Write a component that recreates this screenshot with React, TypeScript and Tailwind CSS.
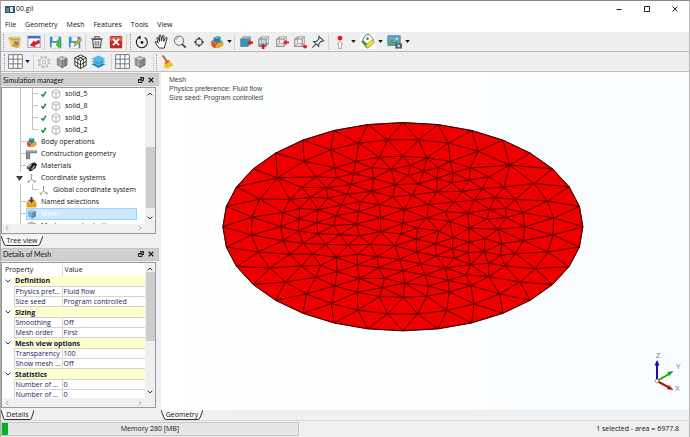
import { memo, useMemo, useState } from "react";
import type { ReactNode } from "react";
import { clsx } from "clsx";

type Point = [number, number];

// Inner nodes of the surface mesh, in model units
const innerNodes: Point[] = [
  [432, 84], [519, 74], [348, 104], [268, 138], [424, 139], [495, 126], [188, 188], [361, 158],
  [304, 185], [365, 188], [417, 175], [472, 158], [530, 162], [335, 218], [262, 217], [410, 208],
  [477, 190], [542, 209], [225, 253], [286, 247], [340, 249], [396, 237], [471, 229], [535, 245],
  [135, 252], [255, 280], [310, 284], [380, 270], [437, 260], [495, 269], [205, 293], [112, 306],
  [253, 312], [306, 323], [364, 302], [432, 290], [498, 308],
  [110, 360], [198, 335], [205, 377], [251, 348], [309, 356], [358, 332], [376, 359], [266, 385],
  [426, 327], [434, 362], [497, 350], [559, 357], [130, 411], [225, 418], [333, 388], [293, 417],
  [400, 390], [467, 388], [541, 392], [365, 427], [428, 418], [488, 425], [165, 459], [260, 453],
  [318, 452], [428, 450], [492, 458], [555, 433], [212, 501], [304, 487], [367, 470], [435, 491],
  [509, 490], [565, 468], [275, 537], [361, 513], [428, 532], [503, 518], [495, 545], [350, 566],
  [430, 586], [519, 597], [567, 547], [565, 325],
  [612, 74], [702, 84], [791, 108], [886, 150], [959, 205], [999, 258], [1018, 309], [565, 123],
  [637, 128], [707, 139], [588, 151], [671, 157], [768, 158], [581, 181], [628, 168], [716, 173],
  [667, 190], [712, 203], [764, 195], [824, 185], [612, 206], [869, 216], [803, 221], [667, 230],
  [742, 229], [593, 240], [720, 261], [780, 255], [843, 247], [903, 253], [641, 268], [569, 283],
  [692, 290], [760, 294], [825, 283], [874, 280], [926, 293], [818, 312], [875, 308], [637, 309],
  [705, 319],
  [1016, 360], [1001, 411], [963, 461], [917, 501], [856, 537], [779, 567], [697, 587], [609, 597],
  [931, 335], [927, 377], [851, 343], [862, 386], [764, 339], [764, 381], [673, 348], [716, 368],
  [609, 339], [605, 372], [663, 386], [713, 401], [812, 371], [809, 410], [761, 413], [859, 421],
  [904, 416], [607, 411], [665, 423], [720, 430], [768, 449], [823, 445], [872, 453], [619, 447],
  [693, 459], [755, 480], [823, 485], [631, 480], [701, 496], [769, 512], [570, 505], [642, 513],
  [704, 531], [637, 544],
];

// 32 nodes on the rim of the ellipse
const rimNodes: Point[] = Array.from({ length: 32 }, (_, i) => {
  const a = (i * Math.PI) / 16;
  return [565 + 541 * Math.cos(a), 335 + 313 * Math.sin(a)];
});

// The disc is seen tilted, so y is stretched back before the nodes are connected
const TILT = 541 / 313;

// Bowyer-Watson triangulation
function triangulate(nodes: Point[]) {
  const flat = nodes.map(([x, y]): Point => [x, y * TILT]);
  const pts: Point[] = [...flat, [-60000, -40000], [60000, -40000], [500, 80000]];
  const n = nodes.length;

  const make = (a: number, b: number, c: number) => {
    const [ax, ay] = pts[a];
    const [bx, by] = pts[b];
    const [cx, cy] = pts[c];
    const d = 2 * (ax * (by - cy) + bx * (cy - ay) + cx * (ay - by));
    const a2 = ax * ax + ay * ay;
    const b2 = bx * bx + by * by;
    const c2 = cx * cx + cy * cy;
    const x = (a2 * (by - cy) + b2 * (cy - ay) + c2 * (ay - by)) / d;
    const y = (a2 * (cx - bx) + b2 * (ax - cx) + c2 * (bx - ax)) / d;
    return { v: [a, b, c], x, y, r: (ax - x) ** 2 + (ay - y) ** 2 };
  };

  let tris = [make(n, n + 1, n + 2)];
  // inner nodes go first, the rim is nearly cocircular and is added last
  for (let i = n - 1; i >= 0; i--) {
    const [px, py] = pts[i];
    const edges = new Map<string, [number, number]>();
    const kept: typeof tris = [];
    for (const t of tris) {
      if ((px - t.x) ** 2 + (py - t.y) ** 2 >= t.r) {
        kept.push(t);
        continue;
      }
      for (let k = 0; k < 3; k++) {
        const a = t.v[k];
        const b = t.v[(k + 1) % 3];
        const key = a < b ? `${a}-${b}` : `${b}-${a}`;
        if (edges.has(key)) edges.delete(key);
        else edges.set(key, [a, b]);
      }
    }
    edges.forEach(([a, b]) => kept.push(make(a, b, i)));
    tris = kept;
  }
  return tris.filter((t) => t.v.every((v) => v < n)).map((t) => t.v.map((v) => nodes[v]));
}

const Icon = ({ children, size = "size-[14px]" }: { children: ReactNode; size?: string }) => (
  <svg viewBox="0 0 16 16" className={clsx(size, "shrink-0")} fill="none" aria-hidden="true">
    {children}
  </svg>
);

const OpenIcon = () => (
  <Icon>
    <path d="M0 3l4-1h10v4l-2 9-8-2z" fill="#c6a640" />
    <path d="M0 3l4 3 1 8-3-3z" fill="#f3dc7c" />
    <path d="M4 6h10v8l-4-1-2-3-3 1z" fill="#e6c95c" />
    <path d="M7 7l6 1-2 5-2-2-2-1z" fill="#8d8566" />
    <path d="M3 2h11v2H3z" fill="#d9d2b0" />
  </Icon>
);

const ImportIcon = () => (
  <Icon>
    <rect x="1" y="1.500" width="14" height="12.500" fill="#fff" stroke="#7c8eb5" />
    <path d="M1 1h14v3H1z" fill="#3f74c8" />
    <path d="M14 5l-5 3-1-2-5 6 7 2-1-2 6-3z" fill="#e02020" />
  </Icon>
);

const SaveIcon = ({ children }: { children: ReactNode }) => (
  <Icon>
    <path d="M1 2h13v13H3l-2-2z" fill="#3b8fc2" />
    <path d="M4 2h7v5H4z" fill="#e8f3fa" />
    <path d="M3 9h9v6H3z" fill="#f5f9fc" />
    {children}
  </Icon>
);

const TrashIcon = () => (
  <Icon>
    <path d="M1.500 4.500h13M5.500 4V2h5v2M3 5l1 9.500h8L13 5z" stroke="#555" strokeWidth="1.300" />
    <path d="M6 7v6M8 7v6M10 7v6" stroke="#666" />
  </Icon>
);

const DeleteIcon = () => (
  <Icon>
    <rect x="1" y="1" width="14" height="14" rx="1" fill="#c5281f" />
    <path d="M1 2h14v5H1z" fill="#dc5a4e" />
    <path d="M4.500 4.500l7 7M11.500 4.500l-7 7" stroke="#fff" strokeWidth="2.200" />
  </Icon>
);

const RotateIcon = () => (
  <Icon>
    <path d="M5 2.600A6.300 6.300 0 1 0 11 2.800" stroke="#222" strokeWidth="1.300" />
    <path d="M2.500 2.500L6.500.5v4.500z" fill="#222" />
    <circle cx="8" cy="8.500" r="1.700" fill="#222" />
  </Icon>
);

const HandIcon = () => (
  <Icon size="size-[15px]">
    <path
      d="M5.500 15L1.500 9.500c-1-1.500.5-2 1.500-1L4.500 10 3 4.500c0-1.200 1.300-1.200 1.600-.2L6 8 5.600 2c0-1.200 1.500-1.300 1.700-.1L8 7.500 9 2c.3-1 1.700-.8 1.600.3L10.300 8l2.200-4c.6-.9 1.700-.3 1.400.6L12 11l-1 4z"
      fill="#fff"
      stroke="#222"
    />
  </Icon>
);

const ZoomIcon = () => (
  <Icon>
    <circle cx="6.800" cy="6.500" r="5.300" stroke="#555" />
    <path d="M3.500 6a3.500 3.500 0 0 1 3-3" stroke="#999" />
    <path d="M10.500 10.500l4 4" stroke="#444" strokeWidth="2" />
  </Icon>
);

const FitIcon = () => (
  <Icon>
    <circle cx="8" cy="8" r="3.800" stroke="#444" strokeWidth="1.200" />
    <path d="M8 2.500V5M8 11v2.500M2.500 8H5M11 8h2.500" stroke="#333" strokeWidth="1.800" />
  </Icon>
);

const BodiesIcon = ({ size }: { size?: string }) => (
  <Icon size={size}>
    <path d="M1 7l5-2 4 3v4l-4 3-4-2z" fill="#df4a24" />
    <path d="M1 7l5-2 4 3-4 2z" fill="#f18340" />
    <path d="M8 9l5-3 2 2v4l-6 3-3-2z" fill="#69a73c" />
    <path d="M7 11l6-3 2 1v3l-6 3-3-1z" fill="#eba733" />
    <path d="M4 3l4-2 4 1v5L8 9 4 7z" fill="#2b7fae" />
    <path d="M4 3l4-2 4 1-4 2z" fill="#6cc0dd" />
  </Icon>
);

const Wireframe = ({ front }: { front?: string }) => (
  <>
    <path d="M5 2h8v8M13 2L10.500 4.500M5 2L2 4.500M5 2v8h8M5 10l-3 3M13 10l-3 3" stroke="#888" strokeWidth=".8" />
    <path d="M2 4.500h8.500V13H2z" stroke="#777" fill={front ?? "none"} />
  </>
);

const ViewFrontIcon = () => (
  <Icon>
    <path d="M2 4.500L5 2h8l-2.500 2.500z" fill="#8fd0ee" />
    <path d="M10.500 4.500L13 2v8l-2.500 3z" fill="#6fa9c4" />
    <Wireframe front="#279bd0" />
    <path d="M16 7.500h-3V5.500L9.500 9l3.500 3v-2h3z" fill="#e01515" />
  </Icon>
);

const ViewBottomIcon = () => (
  <Icon>
    <path d="M2 10h11l-3 3H2z" fill="#47a9d8" />
    <Wireframe front="#8fc9e477" />
    <path d="M5.500 16v-3H4l3-3.500L10 13H8.500v3z" fill="#e01515" />
  </Icon>
);

const ViewRightIcon = () => (
  <Icon>
    <Wireframe />
    <path d="M16 7.500h-3V5.500L9.500 8.500l3.500 3v-2h3z" fill="#e01515" />
  </Icon>
);

const ViewBackIcon = () => (
  <Icon>
    <Wireframe />
    <path d="M16 12h-2v-1.500L10.500 13l3.500 3v-1.500h2z" fill="#e01515" />
  </Icon>
);

const PinIcon = () => (
  <Icon>
    <path d="M1.500 14.500L6 10M9 1.500l5.500 5-1.500.8-1-.3-3 3-.2 3L3 7.500l3.200-.2 3-3-.5-1.500z" stroke="#444" strokeWidth="1.200" />
  </Icon>
);

const VertexIcon = () => (
  <Icon>
    <circle cx="8" cy="3.500" r="2.700" fill="#e01515" />
    <path d="M6.500 15.500v-5H5L8 7l3 3.500H9.500v5z" fill="#fff" stroke="#888" strokeWidth=".8" />
  </Icon>
);

const MeasureIcon = () => (
  <Icon size="size-[15px]">
    <path d="M0 0h16v16H0z" fill="#fff" />
    <path d="M3 6l3-5 4-.5L14 5v4l-6 2-5-2z" fill="#fff" stroke="#666" />
    <circle cx="8" cy="5" r="1.500" fill="#777" />
    <path d="M1 8l3-1 5 5-2 3z" fill="#3d9c35" />
    <path d="M6 12l7-6 2.500 3L8 15.500z" fill="#f4df20" stroke="#7b7416" strokeWidth=".6" />
  </Icon>
);

const ScreenshotIcon = () => (
  <Icon size="size-[15px]">
    <rect x="1" y="2" width="13" height="10" fill="#5fa9d4" stroke="#4f758c" />
    <path d="M2 11l3-5 3 3 2-2 3.500 4z" fill="#5c9d45" />
    <circle cx="10.500" cy="5" r="1" fill="#fff" />
    <path d="M9 10h7v5.500H9z" fill="#4b5f72" />
    <circle cx="12.500" cy="12.700" r="1.500" fill="#c4d8e8" />
  </Icon>
);

const GridIcon = () => (
  <Icon size="size-[15px]">
    <path d="M.5.5h15v15H.5z" fill="#fff" />
    <path d="M.7.7h14.600v14.600H.7zM5.500.7v14.600M10.500.7v14.600M.7 5.500h14.600M.7 10.500h14.600" stroke="#6c6f83" />
  </Icon>
);

const GearIcon = () => (
  <Icon>
    <circle cx="8" cy="8" r="6.300" stroke="#bbb" strokeWidth="2" strokeDasharray="2.500 2.450" />
    <circle cx="8" cy="8" r="4.900" stroke="#b5b5b5" />
    <circle cx="8" cy="8" r="2" stroke="#b5b5b5" />
  </Icon>
);

const CubeIcon = ({ size, blue }: { size?: string; blue?: boolean }) => (
  <Icon size={size}>
    <path d="M8 1l6 2.500v8L8 15l-6-3.500v-8z" fill={blue ? "#6f9abd" : "#8a8a8a"} />
    <path d="M8 1l6 2.500L8 6.500l-6-3z" fill={blue ? "#9cc0dc" : "#b4b4b4"} />
    <path d="M8 6.500l6-3v8L8 15z" fill={blue ? "#4c779a" : "#6e6e6e"} />
    <path d="M4 2.700l6 3v8.300M12 2.700L6 5.500V14M2 6l6 3.500L14 6M2 9l6 3 6-3" stroke="#fff" strokeWidth=".3" />
  </Icon>
);

const MeshCubeIcon = () => (
  <Icon size="size-[15px]">
    <path d="M8 1l6 3v8l-6 3.500L2 12V4z" fill="#fff" stroke="#222" />
    <path d="M2 4l6 3 6-3M8 7v8.500M5 2.500l6 3V14M11 2.500l-6 3V14M2 8l6 3.500L14 8" stroke="#222" strokeWidth=".9" />
  </Icon>
);

const LayersIcon = () => (
  <Icon size="size-[15px]">
    <path d="M8 7.500l7.500 3.500L8 15 .5 11z" fill="#1c86b8" />
    <path d="M8 4.500L15.500 8 8 12 .5 8z" fill="#35a6d8" />
    <path d="M8 1.500L15.500 5 8 9 .5 5z" fill="#4dbdea" />
    <path d="M.5 8L8 12l7.500-4" stroke="#cdeaf6" strokeWidth=".5" />
  </Icon>
);

const BroomIcon = () => (
  <Icon>
    <path d="M3 .5l5 7" stroke="#a8642a" strokeWidth="2" />
    <path d="M5.500 8l4-2.500 6 6-1.500 1-6 3L4 14z" fill="#f5c928" />
    <path d="M5.500 8l4-2.500 1.500 2-4.500 3z" fill="#dc5a2c" />
    <path d="M8 11l2 3M10 9.500l3 3" stroke="#b78d10" strokeWidth=".7" />
  </Icon>
);

const SolidIcon = () => (
  <Icon size="size-[10px]">
    <path d="M8 1l6 3v8l-6 3-6-3V4zM2 4l6 3 6-3M8 7v8" stroke="#999" strokeWidth="1.200" />
  </Icon>
);

const CheckIcon = () => (
  <Icon size="size-[8px]">
    <path d="M3 8.500l3 4 6-9" stroke="#1b8a4c" strokeWidth="3" />
  </Icon>
);

const ConstructionIcon = () => (
  <Icon size="size-[11px]">
    <path d="M0 2h16v4H6v9H0z" fill="#777" />
    <path d="M1 4h14M3 5v9" stroke="#ccc" />
  </Icon>
);

const MaterialsIcon = () => (
  <Icon size="size-[11px]">
    <path d="M2 12a3 3 0 0 1 1-5l5-4 4 4-5 6z" fill="#555" />
    <path d="M9 3l4-1 3 3-2 5-7 5-3-1" fill="#222" />
    <path d="M3 9l5-4M8 12l5-5" stroke="#ddd" strokeWidth="1.500" />
  </Icon>
);

const AxesIcon = () => (
  <Icon size="size-[11px]">
    <path d="M8 2v7M8 9l-5 4M8 9l5 3.500" stroke="#888" strokeWidth="1.200" />
    <path d="M6.500 3.500L8 1.500l1.500 2M3 11v2.500h2.500M11 13h2.500v-2.500" stroke="#888" />
  </Icon>
);

const NamedIcon = () => (
  <Icon size="size-[11px]">
    <path d="M1 8l2-4h10l2 4v7H1z" fill="#f0a92a" />
    <path d="M1 9h4l1 2h4l1-2h4v6H1z" fill="#e8991f" />
    <path d="M6.500 0h3v4H12L8 9 4 4h2.500z" fill="#34425c" />
  </Icon>
);

const ToolButton = ({ label, children }: { label: string; children: ReactNode }) => (
  <button type="button" aria-label={label} className="flex h-[18px] w-[18px] items-center justify-center hover:bg-sky-100">
    {children}
  </button>
);

const DropButton = ({ label }: { label: string }) => (
  <button type="button" aria-label={label} className="flex h-[18px] w-[7px] items-center justify-center">
    <svg viewBox="0 0 6 4" className="h-[3px] w-[5px]" aria-hidden="true">
      <path d="M0 0h6L3 4z" fill="#111" />
    </svg>
  </button>
);

const Separator = () => <span className="mr-px h-4 w-px bg-[#d4d4d4]" />;
const Handle = () => <span className="mx-px h-4 w-px border-l border-dotted border-[#999]" />;

const MainToolbar = () => (
  <div className="flex h-5 items-center gap-px border-b border-[#bcbcbc] bg-[#efefef] pl-px">
    <Handle />
    <ToolButton label="Open"><OpenIcon /></ToolButton>
    <ToolButton label="Import"><ImportIcon /></ToolButton>
    <Separator />
    <ToolButton label="Save">
      <SaveIcon><path d="M9 5h4v5h2l-4 5-4-5h2z" fill="#4cb944" /></SaveIcon>
    </ToolButton>
    <ToolButton label="Save as">
      <SaveIcon><path d="M7 13l1-4 6-6 2 2-6 6z" fill="#eea63a" stroke="#7b5a2c" strokeWidth=".6" /></SaveIcon>
    </ToolButton>
    <Separator />
    <ToolButton label="Clear"><TrashIcon /></ToolButton>
    <ToolButton label="Delete"><DeleteIcon /></ToolButton>
    <Separator />
    <Handle />
    <div className="flex gap-px">
      <ToolButton label="Rotate"><RotateIcon /></ToolButton>
      <ToolButton label="Pan"><HandIcon /></ToolButton>
      <ToolButton label="Zoom"><ZoomIcon /></ToolButton>
    </div>
    <div className="flex">
      <ToolButton label="Fit"><FitIcon /></ToolButton>
      <ToolButton label="Bodies"><BodiesIcon /></ToolButton>
      <DropButton label="Bodies options" />
    </div>
    <Separator />
    <div className="flex">
      <ToolButton label="Front view"><ViewFrontIcon /></ToolButton>
      <ToolButton label="Bottom view"><ViewBottomIcon /></ToolButton>
      <ToolButton label="Right view"><ViewRightIcon /></ToolButton>
      <ToolButton label="Back view"><ViewBackIcon /></ToolButton>
      <ToolButton label="Pin view"><PinIcon /></ToolButton>
    </div>
    <Separator />
    <ToolButton label="Select vertex"><VertexIcon /></ToolButton>
    <DropButton label="Selection options" />
    <ToolButton label="Measure"><MeasureIcon /></ToolButton>
    <DropButton label="Measure options" />
    <ToolButton label="Screenshot"><ScreenshotIcon /></ToolButton>
    <DropButton label="Screenshot options" />
  </div>
);

const MeshToolbar = () => (
  <div className="flex h-5 items-center border-b border-[#bcbcbc] bg-[#efefef] pl-0.5">
    <Handle />
    <ToolButton label="Grid"><GridIcon /></ToolButton>
    <DropButton label="Grid options" />
    <span className="w-0.5" />
    <Separator />
    <ToolButton label="Settings"><GearIcon /></ToolButton>
    <ToolButton label="Solid"><CubeIcon /></ToolButton>
    <ToolButton label="Generate mesh"><MeshCubeIcon /></ToolButton>
    <ToolButton label="Layers"><LayersIcon /></ToolButton>
    <span className="w-1" />
    <Separator />
    <ToolButton label="Surface grid"><GridIcon /></ToolButton>
    <ToolButton label="Volume mesh"><CubeIcon /></ToolButton>
    <span className="w-1" />
    <Separator />
    <Handle />
    <ToolButton label="Clean"><BroomIcon /></ToolButton>
  </div>
);

const PanelHeader = ({ title }: { title: string }) => (
  <div className="flex h-[13px] shrink-0 items-center border border-[#c4c4c4] bg-[#d0d0d0] pr-1 pl-px">
    <h2 className="flex-1 font-['Lato','Open_Sans',sans-serif]">{title}</h2>
    <button type="button" aria-label={`Float ${title}`} className="mr-1">
      <svg viewBox="0 0 6 6" className="size-[6px]" aria-hidden="true">
        <path d="M2 .5h3.500v3H4M.5 2.500H4v3H.500zM.5 3H4M2 1h3.500" fill="none" stroke="#222" />
      </svg>
    </button>
    <button type="button" aria-label={`Close ${title}`}>
      <svg viewBox="0 0 6 6" className="size-[6px]" aria-hidden="true">
        <path d="M.7.7l4.600 4.600M5.300.7L.7 5.300" stroke="#222" strokeWidth="1.300" />
      </svg>
    </button>
  </div>
);

const PanelTab = ({ label, width }: { label: string; width: string }) => (
  <button type="button" className={clsx("relative h-[10px] shrink-0 leading-[10px]", width)}>
    <svg viewBox="0 0 40 10" preserveAspectRatio="none" className="absolute inset-0 size-full" aria-hidden="true">
      <path d="M0 0l3 8q.5 1.500 2 1.500h30q1.500 0 2-1.500l3-8" fill="#f8f8f8" stroke="#333" vectorEffect="non-scaling-stroke" />
    </svg>
    <span className="relative">{label}</span>
  </button>
);

const Chevron = ({ className }: { className?: string }) => (
  <svg viewBox="0 0 6 4" className={clsx("h-1 w-[6px]", className)} aria-hidden="true">
    <path d="M.7.7L3 3 5.300.7" fill="none" stroke="currentColor" />
  </svg>
);

const VerticalScroll = ({ before, after }: { before: string; after: string }) => (
  <div className="flex w-[10px] shrink-0 flex-col items-center bg-[#f0f0f0] py-1 text-[#333]" aria-hidden="true">
    <Chevron className="rotate-180" />
    <div className={before} />
    <div className={clsx("w-[9px] bg-[#cdcdcd]", after)} />
    <Chevron className="mt-auto" />
  </div>
);

const HorizontalScroll = () => (
  <div className="flex h-[9px] shrink-0 items-center justify-between bg-[#f0f0f0] pr-3 pl-0.5 text-[#aaa]" aria-hidden="true">
    <Chevron className="rotate-90" />
    <Chevron className="-rotate-90" />
  </div>
);

const Guide = () => <span className="h-full w-3 shrink-0 border-l border-[#c4c4c4]" />;
const Branch = ({ last }: { last?: boolean }) => (
  <span className="h-full w-1.5 shrink-0">
    <span className="block h-1.5 border-b border-l border-[#c4c4c4]" />
    {!last && <span className="block h-1.5 border-l border-[#c4c4c4]" />}
  </span>
);

const solids = ["solid_5", "solid_8", "solid_3", "solid_2"];

const folders = [
  { name: "Body operations", icon: <BodiesIcon size="size-[11px]" /> },
  { name: "Construction geometry", icon: <ConstructionIcon /> },
  { name: "Materials", icon: <MaterialsIcon /> },
];

const row = "flex h-3 shrink-0 items-center whitespace-nowrap pl-[18px]";

const Tree = () => (
  <ul className="min-w-0 flex-1 overflow-hidden">
    {solids.map((name, i) => (
      <li key={name} className={row}>
        <Guide />
        <Branch last={i === solids.length - 1} />
        <span className="w-0.5" />
        <CheckIcon />
        <span className="w-[3px]" />
        <SolidIcon />
        <span className="pl-1">{name}</span>
      </li>
    ))}
    {folders.map((f) => (
      <li key={f.name} className={row}>
        <Branch />
        {f.icon}
        <span className="pl-1">{f.name}</span>
      </li>
    ))}
    <li>
      <div className="flex h-3 items-center pl-[14px]">
        <button type="button" aria-label="Collapse" className="mr-[3px]">
          <svg viewBox="0 0 7 5" className="h-[5px] w-[7px]" aria-hidden="true">
            <path d="M0 0h7L3.500 5z" fill="#4a3a3a" />
          </svg>
        </button>
        <AxesIcon />
        <span className="pl-1">Coordinate systems</span>
      </div>
      <ul>
        <li className={row}>
          <Guide />
          <Branch last />
          <AxesIcon />
          <span className="pl-1">Global coordinate system</span>
        </li>
      </ul>
    </li>
    <li className={row}>
      <Branch />
      <NamedIcon />
      <span className="pl-1">Named selections</span>
    </li>
    <li className={row} aria-current="true">
      <Branch />
      <span className="mr-2 flex h-full flex-1 items-center border border-[#99d1ff] bg-[#cce8ff] text-white">
        <CubeIcon size="size-[10px]" blue />
        <span className="pl-1">Mesh</span>
      </span>
    </li>
    <li className={row}>
      <Branch />
      <CubeIcon size="size-[11px]" />
      <span className="pl-1">Mesh named selections</span>
    </li>
  </ul>
);

const groups = [
  { title: "Definition", rows: [["Physics preference", "Fluid flow"], ["Size seed", "Program controlled"]] },
  { title: "Sizing", rows: [["Smoothing", "Off"], ["Mesh order", "First"]] },
  { title: "Mesh view options", rows: [["Transparency", "100"], ["Show mesh quality", "Off"]] },
  { title: "Statistics", rows: [["Number of nodes", "0"], ["Number of elements", "0"]] },
];

const Details = () => {
  const [closed, setClosed] = useState<string[]>([]);
  const toggle = (title: string) =>
    setClosed((prev) => (prev.includes(title) ? prev.filter((x) => x !== title) : [...prev, title]));

  return (
    <div className="min-w-0 flex-1 overflow-hidden">
      <table className="w-full table-fixed border-collapse text-left leading-[9px] text-[#1c1c5e]">
        <colgroup>
          <col className="w-[12px]" />
          <col className="w-[48px]" />
          <col />
        </colgroup>
        <thead className="text-[#222]">
          <tr className="h-[13px]">
            <th colSpan={2} className="border-r border-[#ddd] pl-[3px] font-normal">Property</th>
            <th className="pl-0.5 font-normal">Value</th>
          </tr>
        </thead>
        {groups.map((g) => (
          <tbody key={g.title}>
            <tr className="h-[11px]">
              <td className="text-[#333]">
                <button type="button" aria-label={`Toggle ${g.title}`} onClick={() => toggle(g.title)} className="flex w-full justify-center">
                  <Chevron />
                </button>
              </td>
              <th colSpan={2} scope="colgroup" className="bg-[#ffffce] pl-px font-bold text-[#10103c]">{g.title}</th>
            </tr>
            {!closed.includes(g.title) &&
              g.rows.map(([name, value]) => (
                <tr key={name} className="h-[10px]">
                  <td />
                  <th scope="row" className="truncate border border-[#d4d4d4] pl-px font-normal">{name}</th>
                  <td className="border border-r-0 border-[#d4d4d4] pl-px">{value}</td>
                </tr>
              ))}
          </tbody>
        ))}
      </table>
    </div>
  );
};

const Viewport = memo(function Viewport() {
  const triangles = useMemo(() => triangulate([...rimNodes, ...innerNodes]), []);

  return (
    <div className="relative min-h-0 flex-1 overflow-hidden bg-linear-to-r from-white to-[#f8fcff]">
      <svg viewBox="-162 -129 1587 1014" className="size-full" role="img" aria-label="Surface mesh">
        <polygon points={rimNodes.join(" ")} fill="#ee0000" stroke="#200" strokeWidth="3" />
        <g fill="none" stroke="#5a0000" strokeWidth="2" strokeLinejoin="round">
          {triangles.map((t, i) => (
            <polygon key={i} points={t.join(" ")} />
          ))}
        </g>
      </svg>
      <div className="absolute top-[3px] left-2 font-['Liberation_Sans',Arial,sans-serif] text-[7px] leading-[9px] text-[#444]">
        <p>Mesh</p>
        <p>Physics preference: Fluid flow</p>
        <p>Size seed: Program controlled</p>
      </div>
      {/* Axis triad */}
      <svg
        viewBox="0 0 34 46"
        className="absolute right-1 bottom-3 h-[46px] w-[34px] font-['Liberation_Sans',Arial,sans-serif] text-[7px]"
        aria-label="Axes"
      >
        <path d="M6 29V12" stroke="#1010b0" strokeWidth="2" />
        <path d="M3.500 13.500L6 8l2.500 5.500z" fill="#1010b0" />
        <path d="M6 29l12-7" stroke="#18a818" strokeWidth="2" />
        <path d="M16 20l6.500-1-4 5z" fill="#18a818" />
        <path d="M6 29l12 6.500" stroke="#b81010" strokeWidth="2" />
        <path d="M18 33l4.500 5-6.500-.8z" fill="#b81010" />
        <circle cx="6" cy="29" r="1.800" fill="#fff" stroke="#888" strokeWidth=".8" />
        <text x="5" y="6" fill="#778">Z</text>
        <text x="25" y="17" fill="#778">Y</text>
        <text x="24" y="39" fill="#778">X</text>
      </svg>
    </div>
  );
});

const menus = ["File", "Geometry", "Mesh", "Features", "Tools", "View"];

export default function App() {
  return (
    <div className="flex h-screen flex-col overflow-hidden border-t border-r border-l border-t-[#888] border-r-[#bbb] border-l-[#aaa] bg-[#f0f0f0] font-['Open_Sans','Noto_Sans',sans-serif] text-[7px] leading-[10px] text-[#111]">
      <header className="bg-white">
        <div className="flex h-4 items-center pr-[11px] pl-1">
          <svg viewBox="0 0 10 7" className="mr-px h-[7px] w-[10px]" aria-hidden="true">
            <path d="M0 0h10v7H0z" fill="#357" />
            <path d="M1 2h3v4H1z" fill="#5b9a62" />
            <path d="M5 1h3v5H5z" fill="#cde" />
          </svg>
          <h1 className="flex-1 text-[7px]">00.gil</h1>
          <div className="flex gap-[22px] text-[#222]">
            <button type="button" aria-label="Minimize">
              <svg viewBox="0 0 6 6" className="size-[6px]"><path d="M.5 3.500h5" stroke="currentColor" /></svg>
            </button>
            <button type="button" aria-label="Maximize">
              <svg viewBox="0 0 6 6" className="size-[6px]"><path d="M.5.5h5v5h-5z" fill="none" stroke="currentColor" /></svg>
            </button>
            <button type="button" aria-label="Close">
              <svg viewBox="0 0 6 6" className="size-[6px]"><path d="M.5.5l5 5M5.500.5l-5 5" stroke="currentColor" /></svg>
            </button>
          </div>
        </div>
        <nav className="flex h-[15px] items-center gap-[9px] pl-1">
          {menus.map((m) => (
            <button key={m} type="button">{m}</button>
          ))}
        </nav>
      </header>

      <MainToolbar />
      <MeshToolbar />

      <main className="flex min-h-0 flex-1">
        <aside className="mr-0.5 flex w-[158px] shrink-0 flex-col gap-0.5 pt-px">
          <section className="flex min-h-0 flex-1 flex-col">
            <PanelHeader title="Simulation manager" />
            <div className="mt-px mr-[3px] mb-0.5 flex min-h-0 flex-1 flex-col border border-[#999] bg-white">
              <div className="flex min-h-0 flex-1">
                <Tree />
                <VerticalScroll before="h-[51px]" after="h-[61px]" />
              </div>
              <HorizontalScroll />
            </div>
            <PanelTab label="Tree view" width="w-[42px]" />
          </section>
          <section className="flex min-h-0 flex-1 flex-col">
            <PanelHeader title="Details of Mesh" />
            <div className="mt-px mr-[3px] mb-0.5 flex min-h-0 flex-1 flex-col border border-[#999] bg-white">
              <div className="flex min-h-0 flex-1">
                <Details />
                <VerticalScroll before="h-px" after="h-[69px]" />
              </div>
              <HorizontalScroll />
            </div>
            <PanelTab label="Details" width="w-[33px]" />
          </section>
        </aside>

        <section className="flex min-w-0 flex-1 flex-col">
          <Viewport />
          <PanelTab label="Geometry" width="w-[42px]" />
        </section>
      </main>

      <footer className="flex h-[17px] shrink-0 items-center justify-between border-t border-[#d8d8d8] pr-[10px]">
        <div className="relative flex h-[14px] w-[298px] items-center justify-center border border-[#c6c6c6] bg-[#e6e6e6]">
          <span className="absolute inset-y-0 left-0 w-[6px] bg-[#06b025]" />
          <span>Memory 280 [MB]</span>
        </div>
        <p>1 selected - area = 6977.8</p>
      </footer>
    </div>
  );
}
